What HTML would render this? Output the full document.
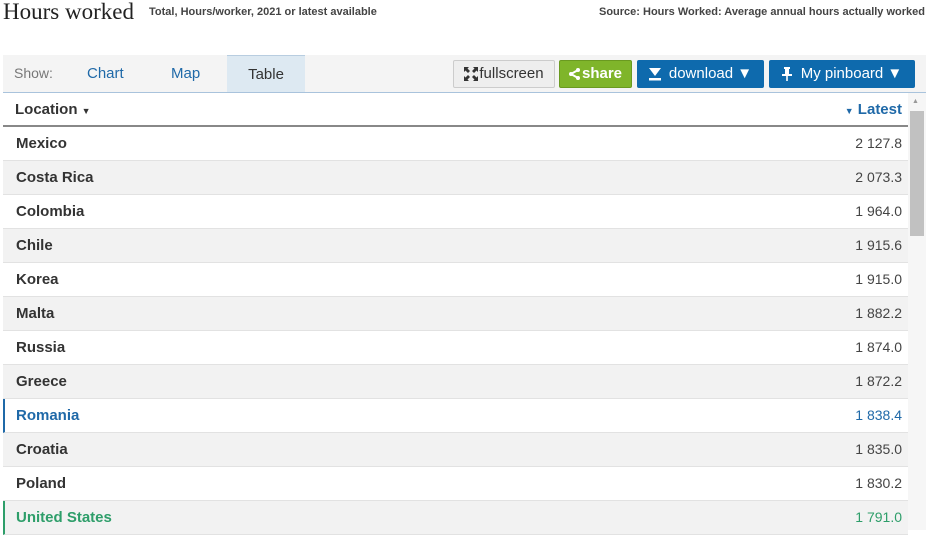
<!DOCTYPE html>
<html><head><meta charset="utf-8"><style>
*{margin:0;padding:0;box-sizing:border-box}
body{width:929px;height:530px;overflow:hidden;background:#fff;font-family:"Liberation Sans",sans-serif;position:relative}
.t{position:absolute;left:3px;top:-1px;font-family:"Liberation Serif",serif;font-size:23px;color:#222}
.sub{position:absolute;left:149px;top:6px;font-size:11px;font-weight:bold;color:#444}
.src{position:absolute;right:4px;top:6px;font-size:11px;font-weight:bold;color:#444}
.bar{position:absolute;left:3px;top:55px;width:923px;height:38px;background:#f4f4f4;border-bottom:1px solid #a9c3dc}
.tab{position:absolute;top:0;height:37px;line-height:37px;font-size:15px;color:#1f69a8}
.btn{position:absolute;top:5px;height:28px;line-height:26px;font-size:15px;border-radius:2px;color:#fff;text-align:center;font-weight:bold;display:flex;align-items:center;justify-content:center;gap:4px}
.hdr{position:absolute;left:3px;top:93px;width:905px;height:34px;border-bottom:2px solid #888;font-size:15px;font-weight:bold}
.row{position:absolute;left:3px;width:905px;height:34px;border-bottom:1px solid #e2e2e2;font-size:15px;line-height:33px}
.row b{position:absolute;left:13px;color:#333}
.row span{position:absolute;right:6px;color:#444;font-size:14px}
.g{background:#f2f2f2}
</style></head><body>
<div class="t">Hours worked</div>
<div class="sub">Total, Hours/worker, 2021 or latest available</div>
<div class="src">Source: Hours Worked: Average annual hours actually worked</div>
<div class="bar">
<div class="tab" style="left:11px;color:#777;font-size:14px">Show:</div>
<div class="tab" style="left:84px">Chart</div>
<div class="tab" style="left:168px">Map</div>
<div class="tab" style="left:224px;width:78px;text-align:center;background:#dde9f2;color:#333;border-top:1px solid #b8cde0">Table</div>
<div class="btn" style="left:450px;width:102px;background:#eee;border:1px solid #ccc;color:#333;font-weight:normal;gap:1px"><svg width="14" height="14" viewBox="0 0 14 14" fill="#333"><path d="M0 0h5L3.5 1.5 6 4 4 6 1.5 3.5 0 5zM14 0v5l-1.5-1.5L10 6 8 4l2.5-2.5L9 0zM0 14V9l1.5 1.5L4 8l2 2-2.5 2.5L5 14zM14 14H9l1.5-1.5L8 10l2-2 2.5 2.5L14 9z"/></svg>fullscreen</div>
<div class="btn" style="left:556px;width:73px;background:#7fb52a;border:1px solid #6a9a20;gap:2px"><svg width="11" height="12" viewBox="0 0 11 12"><path d="M9 2L2 6l7 4" stroke="#fff" stroke-width="2" fill="none"/><circle cx="9" cy="2" r="2" fill="#fff"/><circle cx="2" cy="6" r="2" fill="#fff"/><circle cx="9" cy="10" r="2" fill="#fff"/></svg>share</div>
<div class="btn" style="left:634px;width:127px;background:#0e6aad;font-weight:normal;gap:8px"><svg width="12" height="13" viewBox="0 0 12 13" fill="#fff"><path d="M0 0h12L6 8z"/><rect x="0" y="10" width="12" height="2.5"/></svg>download ▼</div>
<div class="btn" style="left:766px;width:146px;background:#0e6aad;font-weight:normal;gap:9px"><svg width="10" height="14" viewBox="0 0 10 14" fill="#fff"><rect x="2" y="0" width="6" height="2"/><rect x="3" y="2" width="4" height="5"/><rect x="0" y="7" width="10" height="2"/><rect x="4.2" y="9" width="1.6" height="5"/></svg>My pinboard ▼</div>
</div>
<div class="hdr"><span style="position:absolute;left:12px;top:8px;color:#333">Location <small style="font-size:9px">▼</small></span><span style="position:absolute;right:6px;top:8px;color:#1f69a8"><small style="font-size:9px">▼</small> Latest</span></div>
<div class="row" style="top:127px"><b>Mexico</b><span>2 127.8</span></div>
<div class="row g" style="top:161px"><b>Costa Rica</b><span>2 073.3</span></div>
<div class="row" style="top:195px"><b>Colombia</b><span>1 964.0</span></div>
<div class="row g" style="top:229px"><b>Chile</b><span>1 915.6</span></div>
<div class="row" style="top:263px"><b>Korea</b><span>1 915.0</span></div>
<div class="row g" style="top:297px"><b>Malta</b><span>1 882.2</span></div>
<div class="row" style="top:331px"><b>Russia</b><span>1 874.0</span></div>
<div class="row g" style="top:365px"><b>Greece</b><span>1 872.2</span></div>
<div class="row" style="top:399px;border-left:2px solid #1f69a8"><b style="color:#1f69a8;left:11px">Romania</b><span style="color:#1f69a8">1 838.4</span></div>
<div class="row g" style="top:433px"><b>Croatia</b><span>1 835.0</span></div>
<div class="row" style="top:467px"><b>Poland</b><span>1 830.2</span></div>
<div class="row g" style="top:501px;border-left:2px solid #2e9e6a"><b style="color:#2e9e6a;left:11px">United States</b><span style="color:#2e9e6a">1 791.0</span></div>
<div style="position:absolute;left:908px;top:93px;width:18px;height:437px;background:#f6f6f6"></div>
<div style="position:absolute;left:912px;top:98px;font-size:7px;color:#999">▲</div>
<div style="position:absolute;left:910px;top:111px;width:14px;height:125px;background:#c1c1c1"></div>
</body></html>
